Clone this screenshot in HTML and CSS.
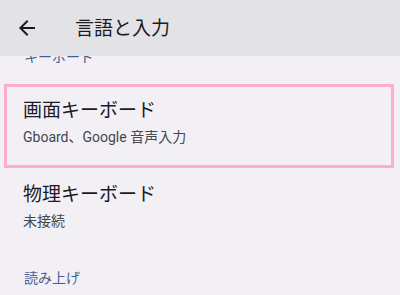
FILE: index.html
```html
<!DOCTYPE html>
<html lang="ja">
<head>
<meta charset="utf-8">
<link rel="stylesheet" href="styles.css">
</head>
<body>
<div class="screen">
  <header class="appbar">
    <span class="back">
      <svg width="24" height="24" viewBox="0 0 24 24"><path d="M20 11H7.83l5.59-5.59L12 4l-8 8 8 8 1.41-1.41L7.83 13H20v-2z" fill="#1b1b1f"/></svg>
    </span>
    <h1 class="title">言語と入力</h1>
  </header>
  <main class="content">
    <div class="category cut">キーボード</div>
    <div class="item highlighted">
      <div class="item-title">画面キーボード</div>
      <div class="item-sub">Gboard、Google 音声入力</div>
    </div>
    <div class="item plain">
      <div class="item-title">物理キーボード</div>
      <div class="item-sub">未接続</div>
    </div>
    <div class="category last">読み上げ</div>
  </main>
</div>
</body>
</html>
```
FILE: styles.css
```css
* { box-sizing: border-box; }
html, body { margin: 0; padding: 0; }
body {
  background: #f2f0f5;
  font-family: Roboto, "Noto Sans CJK JP", "Noto Sans", sans-serif;
  color: #1b1b1f;
}
.screen {
  width: 400px;
  height: 295px;
  overflow: hidden;
  display: flex;
  flex-direction: column;
}
.appbar {
  height: 56px;
  flex: none;
  background: #e3e2e7;
  display: flex;
  align-items: center;
  padding-left: 15px;
  position: relative;
  z-index: 1;
}
.back { width: 24px; height: 24px; display: flex; }
.title {
  margin: 0 0 0 36px;
  font-size: 19px;
  font-weight: 400;
  line-height: 28px;
  padding-top: 1px;
  color: #1b1b1f;
}
.content {
  flex: 1;
  display: flex;
  flex-direction: column;
}
.category {
  font-size: 14px;
  line-height: 20px;
  color: #4b5c8e;
  padding-left: 24px;
}
.category.cut { margin-top: -9px; }
.item-title {
  font-size: 19px;
  line-height: 26px;
}
.item-sub {
  font-size: 14px;
  line-height: 20px;
  color: #46464e;
  margin-top: 3px;
}
.highlighted {
  margin: 17px 6px 0 4px;
  border: 3px solid #ffaec9;
  height: 84px;
  padding-top: 11px;
  padding-left: 16px;
}
.plain {
  padding-top: 14px;
  padding-left: 23px;
  height: 100px;
}
.category.last { margin-top: 0; }
```
